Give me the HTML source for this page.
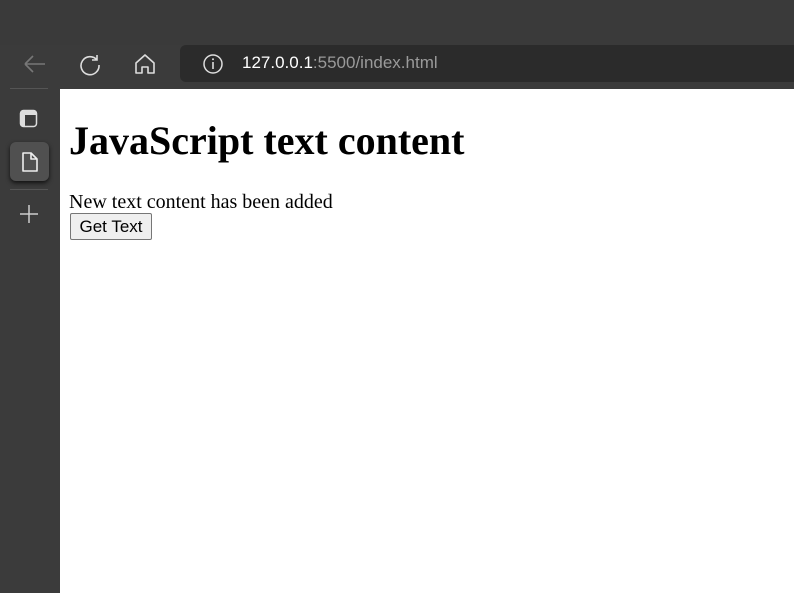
<!DOCTYPE html>
<html><head><style>
body{margin:0;width:794px;height:593px;overflow:hidden;background:#3b3b3b;position:relative;font-family:"Liberation Serif",serif}
.top{position:absolute;left:0;top:0;width:794px;height:45px;background:#3a3a3a}
.addr{position:absolute;left:180px;top:45px;width:620px;height:37px;background:#2b2b2b;border-radius:6px;color:#fff;font:17px "Liberation Sans",sans-serif}
.addr span{position:absolute;left:62px;top:8px}
.content{position:absolute;left:60px;top:89px;width:734px;height:504px;background:#fff}
h1{position:absolute;left:9px;top:28px;margin:0;font-size:40px;font-weight:bold;white-space:nowrap}
p{position:absolute;left:9px;top:102px;margin:0;font-size:20px}
button{position:absolute;left:10px;top:124px;width:82px;height:27px;font:17px "Liberation Sans",sans-serif;background:#efefef;border:1px solid #767676;border-radius:2px;padding:0}
.sep{position:absolute;left:10px;width:38px;height:1px;background:#555}
.sel{position:absolute;left:10px;top:142px;width:39px;height:39px;background:#505050;border-radius:6px;box-shadow:0 2px 4px #111}
svg{position:absolute}
</style></head><body>
<div class="top"></div>
<svg style="left:22px;top:52px" width="26" height="24" viewBox="0 0 26 24"><path d="M3 12H23M3 12L11 4M3 12L11 20" stroke="#777" stroke-width="1.6" fill="none"/></svg>
<svg style="left:78px;top:52px" width="24" height="24" viewBox="0 0 24 24"><path d="M19 8A9 9 0 1 0 21 13M19 3V8H14" stroke="#ddd" stroke-width="1.6" fill="none"/></svg>
<svg style="left:134px;top:52px" width="22" height="24" viewBox="0 0 22 24"><path d="M2 11L11 3L20 11V21H14V15H8V21H2Z" stroke="#ddd" stroke-width="1.6" fill="none" stroke-linejoin="round"/></svg>
<div class="addr"><svg style="left:22px;top:8px" width="22" height="22" viewBox="0 0 22 22"><circle cx="11" cy="11" r="9" stroke="#ddd" stroke-width="1.5" fill="none"/><path d="M11 9V16" stroke="#ddd" stroke-width="1.6"/><circle cx="11" cy="6.3" r="1" fill="#ddd"/></svg><span>127.0.0.1<span style="position:static;color:#9a9a9a">:5500/index.html</span></span></div>
<div class="sep" style="top:88px"></div>
<svg style="left:19px;top:109px" width="20" height="20" viewBox="0 0 20 20"><rect x="1.5" y="1.5" width="16" height="16" rx="3" stroke="#ddd" stroke-width="1.5" fill="none"/><rect x="2" y="2" width="15" height="4" fill="#ddd"/><rect x="2" y="2" width="4" height="15" fill="#ddd"/></svg>
<div class="sel"></div>
<svg style="left:20px;top:151px" width="20" height="22" viewBox="0 0 20 22"><path d="M3 2H11L17 8V20H3Z M11 2V8H17" stroke="#eee" stroke-width="1.6" fill="none" stroke-linejoin="round"/></svg>
<div class="sep" style="top:189px"></div>
<svg style="left:18px;top:203px" width="22" height="22" viewBox="0 0 22 22"><path d="M11 2V20M2 11H20" stroke="#ccc" stroke-width="1.5"/></svg>
<div class="content">
<h1>JavaScript text content</h1>
<p>New text content has been added</p>
<button>Get Text</button>
</div>
</body></html>
